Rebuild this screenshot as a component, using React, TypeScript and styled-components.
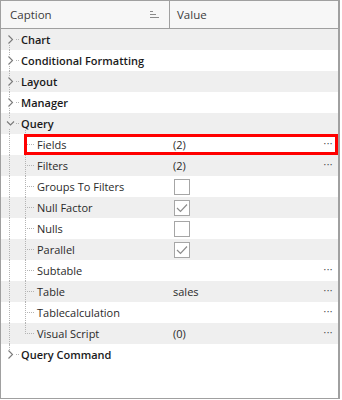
import React from "react";
import styled, { createGlobalStyle } from "styled-components";

type Item = {
  caption: string;
  level: 0 | 1;
  expanded?: boolean;
  value?: string;
  check?: boolean;
  dots?: boolean;
  selected?: boolean;
};

const items: Item[] = [
  { caption: "Chart", level: 0, expanded: false },
  { caption: "Conditional Formatting", level: 0, expanded: false },
  { caption: "Layout", level: 0, expanded: false },
  { caption: "Manager", level: 0, expanded: false },
  { caption: "Query", level: 0, expanded: true },
  { caption: "Fields", level: 1, value: "(2)", dots: true, selected: true },
  { caption: "Filters", level: 1, value: "(2)", dots: true },
  { caption: "Groups To Filters", level: 1, check: false },
  { caption: "Null Factor", level: 1, check: true },
  { caption: "Nulls", level: 1, check: false },
  { caption: "Parallel", level: 1, check: true },
  { caption: "Subtable", level: 1, dots: true },
  { caption: "Table", level: 1, value: "sales", dots: true },
  { caption: "Tablecalculation", level: 1, dots: true },
  { caption: "Visual Script", level: 1, value: "(0)", dots: true },
  { caption: "Query Command", level: 0, expanded: false },
];

const GlobalStyle = createGlobalStyle`
  html, body {
    margin: 0;
    padding: 0;
    background: #ffffff;
  }
  body {
    font-family: "Open Sans", "Noto Sans", Arial, sans-serif;
    font-size: 11px;
    color: #1e1e1e;
  }
`;

const Panel = styled.div`
  width: 340px;
  height: 399px;
  border: 1px solid #a0a0a0;
  border-right-width: 2px;
  box-sizing: border-box;
  background: #ffffff;
  display: flex;
  flex-direction: column;
  overflow: hidden;
`;

const Header = styled.div`
  display: grid;
  grid-template-columns: 168px 1fr;
  height: 27px;
  background: #f7f7f7;
  border-bottom: 1px solid #a0a0a0;
  color: #3c3c3c;
`;

const HeaderCell = styled.div<{ $divider?: boolean }>`
  display: flex;
  align-items: center;
  justify-content: space-between;
  padding: 0 10px 0 ${(p) => (p.$divider ? "7px" : "9px")};
  border-left: ${(p) => (p.$divider ? "1px solid #a0a0a0" : "none")};
  font-size: 11.5px;
`;

const Row = styled.div<{ $alt: boolean; $selected?: boolean }>`
  position: relative;
  display: grid;
  grid-template-columns: 169px 1fr;
  height: 21px;
  background: ${(p) => (p.$alt ? "#efefef" : "#ffffff")};

  ${(p) =>
    p.$selected &&
    `
    &::after {
      content: "";
      position: absolute;
      left: 23px;
      right: 0;
      top: 0;
      bottom: 0;
      border: 3px solid #ff0000;
      pointer-events: none;
    }
  `}
`;

const CaptionCell = styled.div<{ $level: number }>`
  position: relative;
  display: flex;
  align-items: center;
  padding-left: ${(p) => (p.$level === 0 ? "20px" : "36px")};
  font-weight: ${(p) => (p.$level === 0 ? 600 : 400)};
  color: ${(p) => (p.$level === 0 ? "#1a1a1a" : "#2a2a2a")};
  white-space: nowrap;
`;

/* dotted tree guides drawn over the caption cell */
const VLine = styled.span<{ $x: number; $from: string; $to: string }>`
  position: absolute;
  left: ${(p) => p.$x}px;
  top: ${(p) => p.$from};
  bottom: ${(p) => p.$to};
  border-left: 1px dotted #b4b4b4;
`;

const HLine = styled.span<{ $x: number; $w: number }>`
  position: absolute;
  left: ${(p) => p.$x}px;
  top: 10px;
  width: ${(p) => p.$w}px;
  border-top: 1px dotted #b4b4b4;
`;

const Chevron = styled.svg`
  position: absolute;
  left: 5px;
  top: 6px;
`;

const ValueCell = styled.div`
  display: flex;
  align-items: center;
  justify-content: space-between;
  padding: 0 5px 0 3px;
  color: #2a2a2a;
`;

const Dots = styled.span`
  font-size: 10px;
  letter-spacing: 0.5px;
  color: #444;
  margin-bottom: 3px;
`;

const CheckBox = styled.span`
  width: 14px;
  height: 14px;
  border: 1px solid #a6a6a6;
  background: #ffffff;
  display: flex;
  align-items: center;
  justify-content: center;
  margin-left: 1px;
`;

const ChevronIcon: React.FC<{ open?: boolean; bg: string }> = ({ open, bg }) =>
  open ? (
    <Chevron width="9" height="9" viewBox="0 0 9 9">
      <rect x="0" y="0" width="9" height="9" fill={bg} />
      <path d="M1 2.5 L4.5 6 L8 2.5" fill="none" stroke="#7a7a7a" strokeWidth="1.1" />
    </Chevron>
  ) : (
    <Chevron width="9" height="9" viewBox="0 0 9 9">
      <rect x="0" y="0" width="9" height="9" fill={bg} />
      <path d="M2.5 0.5 L6.5 4.5 L2.5 8.5" fill="none" stroke="#7a7a7a" strokeWidth="1.1" />
    </Chevron>
  );

const SortIcon = () => (
  <svg width="9" height="7" viewBox="0 0 9 7">
    <rect x="0" y="0" width="3" height="1" fill="#8a8a8a" />
    <rect x="0" y="3" width="6" height="1" fill="#8a8a8a" />
    <rect x="0" y="6" width="9" height="1" fill="#8a8a8a" />
  </svg>
);

const CheckMark = () => (
  <svg width="12" height="10" viewBox="0 0 12 10">
    <path d="M1 5 L4.5 8.5 L11 1.5" fill="none" stroke="#8c8c8c" strokeWidth="1.2" />
  </svg>
);

const App: React.FC = () => {
  const lastTop = items.map((i) => i.level).lastIndexOf(0);
  const firstChild = items.findIndex((i) => i.level === 1);
  const lastChild = items.map((i) => i.level).lastIndexOf(1);

  return (
    <>
      <GlobalStyle />
      <Panel>
        <Header>
          <HeaderCell>
            <span>Caption</span>
            <SortIcon />
          </HeaderCell>
          <HeaderCell $divider>Value</HeaderCell>
        </Header>
        {items.map((item, i) => {
          const bg = i % 2 === 0 ? "#efefef" : "#ffffff";
          return (
            <Row key={item.caption} $alt={i % 2 === 0} $selected={item.selected}>
              <CaptionCell $level={item.level}>
                {i <= lastTop && (
                  <VLine
                    $x={8}
                    $from={i === 0 ? "10px" : "0"}
                    $to={i === lastTop ? "11px" : "0"}
                  />
                )}
                {item.level === 1 && (
                  <VLine
                    $x={24}
                    $from={i === firstChild ? "-6px" : "0"}
                    $to={i === lastChild ? "10px" : "0"}
                  />
                )}
                {item.level === 0 ? (
                  <>
                    <HLine $x={12} $w={6} />
                    <ChevronIcon open={item.expanded} bg={bg} />
                  </>
                ) : (
                  <HLine $x={26} $w={7} />
                )}
                {item.caption}
              </CaptionCell>
              {item.level === 0 ? (
                <ValueCell />
              ) : (
                <ValueCell>
                  {item.check !== undefined ? (
                    <CheckBox>{item.check && <CheckMark />}</CheckBox>
                  ) : (
                    <span>{item.value ?? ""}</span>
                  )}
                  {item.dots && <Dots>···</Dots>}
                </ValueCell>
              )}
            </Row>
          );
        })}
      </Panel>
    </>
  );
};

export default App;
